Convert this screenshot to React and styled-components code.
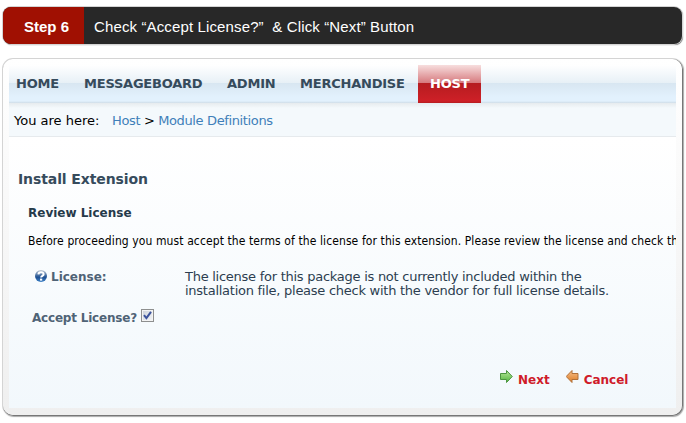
import React from 'react';
import styled, { createGlobalStyle } from 'styled-components';

const navItems = [
    { label: 'HOME', width: 68 },
    { label: 'MESSAGEBOARD', width: 143 },
    { label: 'ADMIN', width: 73 },
    { label: 'MERCHANDISE', width: 125 },
    { label: 'HOST', width: 63, active: true },
];

const HelpIcon = () => (
    <svg width="14" height="14" viewBox="0 0 14 14">
        <defs>
            <linearGradient id="help" x1="0" y1="0" x2="0" y2="1">
                <stop offset="0" stopColor="#c3cbd6" />
                <stop offset="0.4" stopColor="#5479a8" />
                <stop offset="0.6" stopColor="#1d4f92" />
                <stop offset="1" stopColor="#3f83c8" />
            </linearGradient>
        </defs>
        <circle cx="6" cy="6" r="6" fill="url(#help)" />
        <path d="M3.4 4.4C3.6 1.4 8.8 1.4 8.6 4.4C8.5 6 6.1 5.8 6.1 7.6" fill="none" stroke="#fff" strokeWidth="2" />
        <rect x="5" y="8.6" width="2.2" height="2" fill="#fff" />
    </svg>
);

const ArrowIcon = ({ id, light, dark, line, flip }) => (
    <svg width="14" height="14" viewBox="0 0 14 14">
        <defs>
            <linearGradient id={id} x1="0" y1="0" x2="0" y2="1">
                <stop offset="0" stopColor={light} />
                <stop offset="1" stopColor={dark} />
            </linearGradient>
        </defs>
        <path
            d="M0.5 3.5H6.5V0.5L12.3 6.5L6.5 12.5V9.5H0.5Z"
            transform={flip ? 'translate(12.5 0) scale(-1 1)' : undefined}
            fill={`url(#${id})`}
            stroke={line}
            strokeLinejoin="round"
        />
    </svg>
);

const App = () => {
    return (
        <Page>
            <GlobalStyle />
            <StepBar>
                <StepNumber>Step 6</StepNumber>
                <StepText>Check “Accept License?”&nbsp; &amp; Click “Next” Button</StepText>
            </StepBar>
            <Card>
                <Screen>
                    <Nav>
                        {navItems.map((item) => (
                            <NavItem key={item.label} $width={item.width} $active={item.active}>
                                {item.label}
                            </NavItem>
                        ))}
                    </Nav>
                    <Breadcrumb>
                        <Here>You are here:</Here>
                        <Trail><Crumb>Host</Crumb> &gt; <Crumb>Module Definitions</Crumb></Trail>
                    </Breadcrumb>
                    <Content>
                        <Title>Install Extension</Title>
                        <Subtitle>Review License</Subtitle>
                        <Intro>
                            Before proceeding you must accept the terms of the license for this extension. Please review the license and check th
                        </Intro>
                        <LicenseRow>
                            <Label>
                                <HelpIcon />
                                License:
                            </Label>
                            <LicenseText>
                                The license for this package is not currently included within the
                                <br />
                                installation file, please check with the vendor for full license details.
                            </LicenseText>
                        </LicenseRow>
                        <AcceptRow>
                            Accept License?
                            <Checkbox>
                                <svg width="9" height="9" viewBox="0 0 9 9">
                                    <path d="M1 4.2L3.4 7.2L8 0.8" fill="none" stroke="#3c539c" strokeWidth="2" />
                                </svg>
                            </Checkbox>
                        </AcceptRow>
                        <Actions>
                            <Action>
                                <ArrowIcon id="next" light="#b9e79b" dark="#4fb53c" line="#4c9440" />
                                Next
                            </Action>
                            <Action>
                                <ArrowIcon id="cancel" light="#f7c08a" dark="#dc7a22" line="#b0703a" flip />
                                Cancel
                            </Action>
                        </Actions>
                    </Content>
                </Screen>
            </Card>
        </Page>
    );
};

export default App;

const GlobalStyle = createGlobalStyle`
  body {
    margin: 0;
    background: #fff;
  }
`;

const Page = styled.div`
  box-sizing: border-box;
  width: 686px;
  height: 423px;
  padding: 7px 3px 0;
  overflow: hidden;
  font-family: Verdana, "DejaVu Sans", sans-serif;
  font-size: 13px;
  white-space: nowrap;
`;

const StepBar = styled.div`
  display: flex;
  width: 679px;
  height: 37px;
  border-radius: 8px;
  overflow: hidden;
  background: #282828;
  box-shadow: 0 0 0 1px #d4d4d4, 1px 1px 1px #555;
  font-family: Helvetica, "Liberation Sans", sans-serif;
  font-size: 15px;
  line-height: 39px;
  color: #fff;
`;

const StepNumber = styled.div`
  box-sizing: border-box;
  width: 81px;
  padding-left: 21px;
  background: #a01002;
  font-weight: bold;
`;

const StepText = styled.div`
  padding-left: 10px;
  letter-spacing: 0.13px;
`;

const Card = styled.div`
  box-sizing: border-box;
  width: 679px;
  height: 356px;
  margin-top: 15px;
  padding: 6px 6px 7px;
  border-radius: 10px;
  background: linear-gradient(#fff, #efefef);
  box-shadow: 0.5px 0.5px 0 0.5px #777, 0 0 0 1px #d4d4d4, 1px 1px 1px 1px #aaa;
`;

const Screen = styled.div`
  display: flex;
  flex-direction: column;
  height: 343px;
  overflow: hidden;
`;

const Nav = styled.div`
  display: flex;
  height: 38px;
  background: linear-gradient(#fff 0, #e7f0f6 18px, #d8e6f1 18px, #e2f1fd 32px, #e2f1fd 36px, #cfdce7 38px);
`;

const NavItem = styled.div`
  box-sizing: border-box;
  width: ${({ $width }) => $width}px;
  padding-left: ${({ $active }) => ($active ? 12 : 7)}px;
  font-weight: bold;
  letter-spacing: -0.22px;
  line-height: 38px;
  color: ${({ $active }) => ($active ? '#fff' : '#364b5c')};
  background: ${({ $active }) => ($active
    ? 'linear-gradient(#f7dede 0, #d6797d 18px, #b51c20 18px, #ce2027 36px, #b51c20 38px)'
    : 'none')};
`;

const Breadcrumb = styled.div`
  display: flex;
  box-sizing: border-box;
  height: 34px;
  padding-left: 5px;
  border-bottom: 1px solid #e6eaed;
  background: linear-gradient(#e6ebee, #f4f9fc 5px);
  line-height: 35px;
  color: #000;
`;

const Here = styled.div`
  width: 98px;
`;

const Trail = styled.div`
  letter-spacing: -0.37px;
`;

const Crumb = styled.span`
  color: #3f7fb9;
`;

const Content = styled.div`
  flex: 1;
  background: linear-gradient(#fff, #f2f8fc);
`;

const Title = styled.div`
  padding: 33px 0 0 9px;
  font-size: 14px;
  font-weight: bold;
  letter-spacing: -0.1px;
  line-height: 18px;
  color: #364b5c;
`;

const Subtitle = styled.div`
  padding: 17px 0 0 19px;
  font-size: 12px;
  font-weight: bold;
  line-height: 16px;
  color: #263a4a;
`;

const Intro = styled.div`
  padding: 12px 0 0 19px;
  font-family: Tahoma, "DejaVu Sans Condensed", sans-serif;
  font-size: 12px;
  letter-spacing: 0.1px;
  line-height: 16px;
  color: #000;
`;

const LicenseRow = styled.div`
  display: flex;
  padding: 21px 0 0 26px;
`;

const Label = styled.div`
  display: flex;
  gap: 2px;
  width: 150px;
  font-size: 12px;
  font-weight: bold;
  line-height: 15px;
  color: #4f6376;
`;

const LicenseText = styled.div`
  letter-spacing: -0.26px;
  line-height: 14px;
  color: #2c3e50;
`;

const AcceptRow = styled.div`
  display: flex;
  padding: 11px 0 0 23px;
  font-size: 12px;
  font-weight: bold;
  letter-spacing: -0.2px;
  line-height: 18px;
  color: #4f6376;
`;

const Checkbox = styled.div`
  display: flex;
  align-items: center;
  justify-content: center;
  box-sizing: border-box;
  width: 13px;
  height: 13px;
  margin-left: 4px;
  border: 1px solid #8e8f8f;
  background: linear-gradient(135deg, #cbd1d9, #f5f6f8);
  box-shadow: inset 0 0 0 1px #f4f4f4;
`;

const Actions = styled.div`
  display: flex;
  gap: 16px;
  padding: 43px 0 0 491px;
`;

const Action = styled.div`
  display: flex;
  gap: 4px;
  font-size: 12px;
  font-weight: bold;
  line-height: 20px;
  color: #cf1b2a;
`;
